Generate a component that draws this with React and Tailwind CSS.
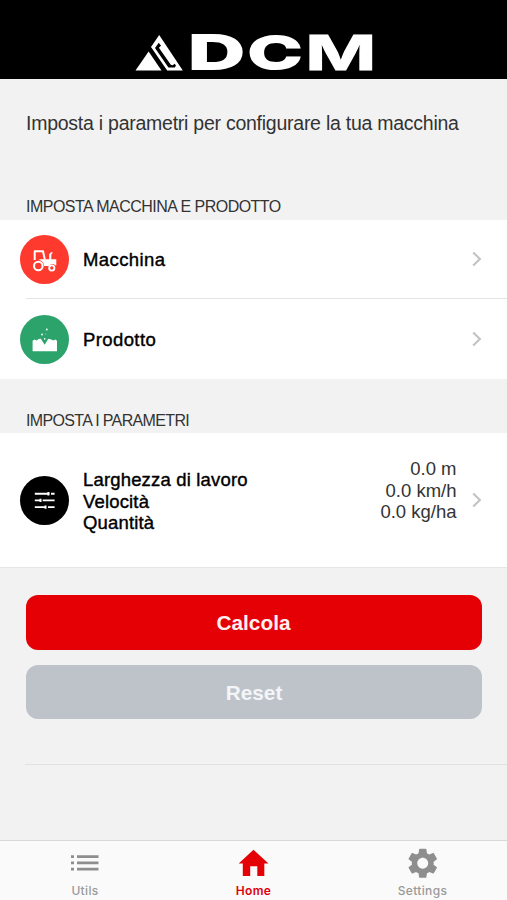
const sans = "font-['Liberation_Sans',Arial,sans-serif]";

function Logo() {
  return (
    <svg width="507" height="79" viewBox="0 0 507 79" className="overflow-visible" aria-label="DCM">
      <path d="M135.5 70.5 148.6 51.5 161.5 70.5Z" fill="#fff" />
      <path
        fill="#fff"
        fillRule="evenodd"
        d="M159.2 35 182.8 70.5H167.2L151 47ZM158.8 42.8 155 48 168.4 67.4H174.8L176 65.6 174.6 63.7 172.8 65.2 170.8 64.8 158.9 47.7 161 45.8Z"
      />
      <g
        fill="#fff"
        stroke="#fff"
        strokeWidth="2.2"
        fontFamily="Inter, 'Liberation Sans', sans-serif"
        fontWeight="700"
        fontSize="46"
      >
        <text transform="translate(188.6 69.4) scale(1.68 1)" x="0" y="0">D</text>
        <text transform="translate(248 68.9) scale(1.58 .97)" x="0" y="0">C</text>
        <text transform="translate(304.9 70.2) scale(1.6 1)" x="0" y="0" fontSize="48" strokeWidth=".8">M</text>
      </g>
    </svg>
  );
}

function Chevron() {
  return (
    <svg width="10" height="16" viewBox="0 0 10 16" className="shrink-0" fill="none" stroke="#c3c3c6" strokeWidth="2.1">
      <path d="m1.2 1.4 6.7 6.6-6.7 6.6" />
    </svg>
  );
}

function TractorIcon() {
  return (
    <svg width="49" height="49" viewBox="0 0 49 49" fill="none" stroke="#fff">
      <path d="M14.7 25V16.3H23L24.8 24.4" strokeWidth="2" strokeLinejoin="round" />
      <circle cx="18.3" cy="31" r="4.3" strokeWidth="2.1" />
      <circle cx="31.8" cy="33" r="2.6" strokeWidth="1.9" />
      <path d="M20.7 24.2H29.2V19.3L31 17.2H32.9L31.3 19.8V24.2H36.3V30.2H35.2C33.2 28 30.2 28.8 28.9 31H24.2C23.8 27.5 21.6 25.2 18.5 24.8Z" fill="#fff" stroke="none" />
    </svg>
  );
}

function SoilIcon() {
  return (
    <svg width="49" height="49" viewBox="0 0 49 49" fill="#fff">
      <path d="M12.6 36.3V25.8L14.8 24.6 16.8 25.5 18.5 24 20.8 23.7 24.7 29.8 28.3 23.7 31.3 24.4 33.3 25.4 35.3 24.5 37 25.8V36.3Z" />
      <circle cx="22" cy="19.5" r=".9" />
      <circle cx="26.8" cy="14.5" r=".9" />
      <circle cx="25.8" cy="19" r=".45" />
      <circle cx="24.7" cy="23.8" r=".85" />
    </svg>
  );
}

function SlidersIcon() {
  return (
    <svg width="49" height="49" viewBox="0 0 49 49" stroke="#fff" strokeWidth="1.9" fill="none">
      <path d="M14.8 17.7H29.4M31 17.7H34.6M14.8 24.4H20.7M22.7 24.4H34.6M14.8 31.1H26M28 31.1H34.6" />
      <path d="M28.4 16V19.4M20.5 22.7V26.1M25.5 29.4V32.8" strokeWidth="2" />
    </svg>
  );
}

function Row({ icon, color, label, height }) {
  return (
    <div className={`flex items-center pr-[25px] pl-[20.4px] ${height}`}>
      <div className={`flex size-[49px] shrink-0 rounded-full ${color}`}>{icon}</div>
      <div className="ml-[13.6px] flex-1 pt-[2px] text-[18.5px] leading-6 tracking-[0.4px] text-black [-webkit-text-stroke:0.4px_black]">
        {label}
      </div>
      <Chevron />
    </div>
  );
}

export default function App() {
  return (
    <div className={`flex h-[900px] w-[507px] flex-col overflow-hidden bg-[#f2f2f2] ${sans}`}>
      <header className="h-[79px] shrink-0 bg-black">
        <Logo />
      </header>

      <main className="flex flex-1 flex-col">
        <p className="h-[116px] pt-[32px] pl-[26px] text-[19.5px] leading-6 tracking-[-0.25px] whitespace-nowrap text-[#333]">
          Imposta i parametri per configurare la tua macchina
        </p>
        <h2 className="h-[25px] pl-[26px] text-[16px] leading-6 tracking-[-0.52px] text-[#333]">
          IMPOSTA MACCHINA E PRODOTTO
        </h2>
        <section className="h-[159px] bg-white">
          <Row icon={<TractorIcon />} color="bg-[#fe3a2f]" label="Macchina" height="h-[78px]" />
          <div className="ml-[26px] h-px bg-[#e4e4e6]" />
          <Row icon={<SoilIcon />} color="bg-[#2ba36b]" label="Prodotto" height="h-[80px]" />
        </section>

        <h2 className="h-[54px] pt-[30px] pl-[26px] text-[16px] leading-6 tracking-[-0.65px] text-[#333]">
          IMPOSTA I PARAMETRI
        </h2>
        <section className="flex h-[135px] items-center border-b border-[#e6e6e6] bg-white pr-[25px] pl-[20.4px]">
          <div className="flex size-[49px] shrink-0 rounded-full bg-black">
            <SlidersIcon />
          </div>
          <div className="ml-[13.6px] flex-1 pt-[3px] text-[18.5px] leading-[21.7px] tracking-[0.17px] text-black [-webkit-text-stroke:0.4px_black]">
            <div>Larghezza di lavoro</div>
            <div>Velocità</div>
            <div>Quantità</div>
          </div>
          <div className="mr-[15.5px] mb-[19px] text-right text-[18.5px] leading-[21.7px] text-[#333]">
            <div>0.0 m</div>
            <div>0.0 km/h</div>
            <div>0.0 kg/ha</div>
          </div>
          <Chevron />
        </section>

        <div className="flex flex-col gap-[15px] pt-[27px] pr-[25px] pl-[26px]">
          <button className="h-[55px] rounded-[12px] bg-[#e50006] pr-px text-[20.8px] font-bold text-[#fff0f0]">Calcola</button>
          <button className="h-[54px] rounded-[12px] bg-[#bec3ca] pt-[2px] text-[20.8px] font-bold text-[#f3f5f8]">Reset</button>
        </div>
        <div className="mt-[45px] ml-[25px] h-px bg-[#e1e1e1]" />
      </main>

      <nav className="grid h-[60px] shrink-0 grid-cols-3 border-t border-[#d9d9d9] bg-[#fafafa] font-['Inter','Liberation_Sans',sans-serif] text-[12px] leading-4 font-medium tracking-[0.35px] text-[#999]">
        <div className="flex flex-col items-center pl-px">
          <svg width="32" height="42" viewBox="0 0 32 42" fill="#8e8e8e">
            <path d="M2 14.3h3v2.7H2zM2 20.6h3v2.7H2zM2 26.8h3v2.7H2zM8 14.3h21.5v2.7H8zM8 20.6h21.5v2.7H8zM8 26.8h21.5v2.7H8z" />
          </svg>
          <span>Utils</span>
        </div>
        <div className="flex flex-col items-center font-semibold text-[#e0000b]">
          <svg width="32" height="42" viewBox="0 0 32 42" fill="#e50006">
            <path d="M15.5 8.7 30.5 22.5H26.3V35H19.3V25.2H12.2V35H4.8V22.5H.7Z" />
          </svg>
          <span>Home</span>
        </div>
        <div className="flex flex-col items-center">
          <svg width="36" height="42" viewBox="0 0 36 42">
            <path
              transform="translate(-.5 4) scale(1.52)"
              fill="#8e8e8e"
              d="M19.14 12.94c.04-.3.06-.61.06-.94 0-.32-.02-.64-.07-.94l2.03-1.58c.18-.14.23-.41.12-.61l-1.92-3.32c-.12-.22-.37-.29-.59-.22l-2.39.96c-.5-.38-1.03-.7-1.62-.94l-.36-2.54c-.04-.24-.24-.41-.48-.41h-3.84c-.24 0-.43.17-.47.41l-.36 2.54c-.59.24-1.13.57-1.62.94l-2.39-.96c-.22-.08-.47 0-.59.22L2.74 8.87c-.12.21-.08.47.12.61l2.03 1.58c-.05.3-.09.63-.09.94s.02.64.07.94l-2.03 1.58c-.18.14-.23.41-.12.61l1.92 3.32c.12.22.37.29.59.22l2.39-.96c.5.38 1.03.7 1.62.94l.36 2.54c.05.24.24.41.48.41h3.84c.24 0 .44-.17.47-.41l.36-2.54c.59-.24 1.13-.56 1.62-.94l2.39.96c.22.08.47 0 .59-.22l1.92-3.32c.12-.22.07-.47-.12-.61l-2.01-1.58zM12 15.6c-1.98 0-3.6-1.62-3.6-3.6s1.62-3.6 3.6-3.6 3.6 1.62 3.6 3.6-1.62 3.6-3.6 3.6z"
            />
          </svg>
          <span>Settings</span>
        </div>
      </nav>
    </div>
  );
}
